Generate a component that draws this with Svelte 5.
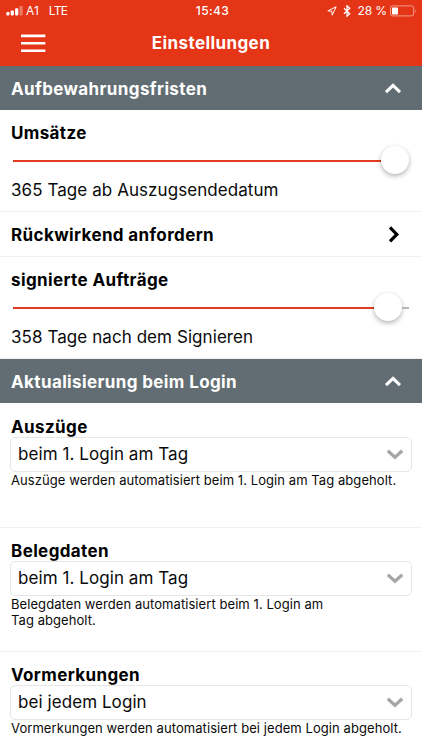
<script>
  let retention = [
    { name: 'Umsätze', days: 365, text: 'Tage ab Auszugsendedatum' },
    { name: 'signierte Aufträge', days: 358, text: 'Tage nach dem Signieren' },
  ];

  let updates = [
    {
      name: 'Auszüge',
      value: 'beim 1. Login am Tag',
      hint: ['Auszüge werden automatisiert beim 1. Login am Tag abgeholt.'],
    },
    {
      name: 'Belegdaten',
      value: 'beim 1. Login am Tag',
      hint: ['Belegdaten werden automatisiert beim 1. Login am', 'Tag abgeholt.'],
    },
    {
      name: 'Vormerkungen',
      value: 'bei jedem Login',
      hint: ['Vormerkungen werden automatisiert bei jedem Login abgeholt.'],
    },
  ];

  let showRetention = true;
  let showUpdates = true;

  // the knob is 28px wide and moves inside the track
  const fill = (days) => `calc((100% - 28px) * ${days / 365})`;
</script>

{#snippet slider(item)}
  <div class="row slider-row">
    <div class="label">{item.name}</div>
    <div class="slider">
      <div class="filled" style="width: {fill(item.days)}"></div>
      <div class="knob"></div>
      <div class="rest"></div>
    </div>
    <div class="value">{item.days} {item.text}</div>
  </div>
{/snippet}

{#snippet band(title, toggle)}
  <button class="band" on:click={toggle}>
    <span>{title}</span>
    <svg width="18" height="12" viewBox="0 0 18 12">
      <path d="M2 9.2 L9 2.4 L16 9.2" fill="none" stroke="#fff" stroke-width="3" />
    </svg>
  </button>
{/snippet}

<div class="screen">
  <header>
    <div class="status">
      <div class="left">
        <svg width="20" height="12" viewBox="0 0 20 12">
          <rect x="0.3" y="7" width="3.2" height="3.4" rx="0.8" fill="#fff" />
          <rect x="4.7" y="5.4" width="3.2" height="5" rx="0.8" fill="#fff" />
          <rect x="9.1" y="3.2" width="3.2" height="7.2" rx="0.8" fill="#fff" />
          <rect x="13.5" y="1" width="3.2" height="9.4" rx="0.8" fill="#fff" opacity="0.35" />
        </svg>
        <span class="carrier">A1</span>
        <span class="net">LTE</span>
      </div>
      <div class="clock">15:43</div>
      <div class="right">
        <svg class="arrow" width="10" height="10" viewBox="0 0 10 10">
          <path d="M9.1 0.8 L0.8 4.9 L4.8 5.1 L5.2 9.2 Z" fill="none" stroke="#fff" stroke-width="1" stroke-linejoin="round" />
        </svg>
        <svg class="bt" width="8" height="12" viewBox="0 0 8 12">
          <path d="M1 3.3 L6.7 8.7 L4 11.2 V0.8 L6.7 3.3 L1 8.7" fill="none" stroke="#fff" stroke-width="1.3" />
        </svg>
        <span class="percent">28 %</span>
        <svg width="27" height="12" viewBox="0 0 27 12">
          <rect x="0.5" y="0.9" width="23.2" height="10" rx="2" fill="none" stroke="#fff" stroke-opacity="0.5" />
          <rect x="2" y="2.4" width="6" height="7" rx="0.6" fill="#fff" />
          <path d="M25 4 Q26.6 6 25 8 Z" fill="#fff" opacity="0.5" />
        </svg>
      </div>
    </div>
    <div class="bar">
      <button class="menu" aria-label="Menü">
        <svg width="25" height="19" viewBox="0 0 25 19">
          <path d="M0 1.9 H24.4 M0 9.3 H24.4 M0 16.8 H24.4" fill="none" stroke="#fff" stroke-width="2.6" />
        </svg>
      </button>
      <h1>Einstellungen</h1>
    </div>
  </header>

  {@render band('Aufbewahrungsfristen', () => (showRetention = !showRetention))}
  {#if showRetention}
    {@render slider(retention[0])}
    <div class="row link">
      <span>Rückwirkend anfordern</span>
      <svg width="12" height="18" viewBox="0 0 12 18">
        <path d="M2 1.4 L8.8 8.4 L2 15.4" fill="none" stroke="#000" stroke-width="3.2" />
      </svg>
    </div>
    {@render slider(retention[1])}
  {/if}

  {@render band('Aktualisierung beim Login', () => (showUpdates = !showUpdates))}
  {#if showUpdates}
    {#each updates as item}
      <div class="update">
        <div class="label">{item.name}</div>
        <div class="select">
          <span>{item.value}</span>
          <svg width="18" height="12" viewBox="0 0 18 12">
            <path d="M1.8 2.7 L9 9.3 L16.2 2.7" fill="none" stroke="#a6a6a6" stroke-width="3.2" />
          </svg>
        </div>
        <div class="hint">
          {#each item.hint as line}
            <div>{line}</div>
          {/each}
        </div>
      </div>
    {/each}
  {/if}
</div>

<style>
  :global(body) {
    margin: 0;
    background: #fff;
  }

  .screen {
    width: 422px;
    height: 750px;
    overflow: hidden;
    font-family: Inter, 'Liberation Sans', sans-serif;
    font-size: 17px;
    letter-spacing: 0.07px;
    color: #0a0a0a;
  }

  button {
    border: 0;
    font: inherit;
    color: inherit;
  }

  svg {
    display: block;
    flex: none;
  }

  header {
    height: 66px;
    background: #e53517;
    color: #fff;
  }

  .status {
    display: grid;
    grid-template-columns: 1fr auto 1fr;
    align-items: center;
    height: 22px;
    padding: 0 5px 0 6px;
    font-size: 12px;
    line-height: 22px;
    letter-spacing: 0;
  }

  .left,
  .right {
    display: flex;
    align-items: center;
  }

  .right {
    justify-content: flex-end;
  }

  .net {
    margin-left: 10px;
    letter-spacing: -0.7px;
  }

  .clock {
    padding-left: 2px;
    font-weight: 500;
    letter-spacing: 0.4px;
  }

  .arrow {
    margin-right: 1px;
  }

  .bt {
    margin-left: 5px;
  }

  .percent {
    margin: 0 3px 0 6px;
    letter-spacing: -0.1px;
  }

  .bar {
    display: grid;
    grid-template-columns: 60px 1fr 60px;
    align-items: center;
    height: 42px;
  }

  .menu {
    width: 25px;
    margin-left: 20.5px;
    padding: 0;
    background: none;
  }

  h1 {
    margin: 0;
    font-size: 17px;
    font-weight: 650;
    letter-spacing: 0.4px;
    line-height: 20px;
    text-align: center;
  }

  .band {
    display: flex;
    align-items: center;
    justify-content: space-between;
    box-sizing: border-box;
    width: 100%;
    height: 44px;
    padding: 1px 20px 0 11px;
    background: #626d73;
    color: #fff;
    font-weight: 650;
    letter-spacing: 0.38px;
  }

  .row {
    box-sizing: border-box;
    padding: 13px 10px 0 11px;
    border-bottom: 1px solid #f0f0f0;
  }

  .label,
  .link {
    font-weight: 650;
    letter-spacing: 0.38px;
    line-height: 20px;
    color: #000;
  }

  .slider-row {
    height: 102px;
  }

  .slider {
    display: flex;
    align-items: center;
    height: 36px;
    margin: 0 3px 0 2px;
  }

  .filled {
    flex: none;
    height: 2px;
    background: #e03c20;
  }

  .knob {
    flex: none;
    width: 28px;
    height: 28px;
    margin-top: -2px;
    border-radius: 50%;
    background: #fff;
    box-shadow: 0 2px 5px rgba(0, 0, 0, 0.3);
  }

  .rest {
    flex: 1 1 0;
    height: 2px;
    background: #b5b5b5;
  }

  .value {
    margin-top: 1px;
    line-height: 20px;
  }

  .link {
    display: flex;
    align-items: center;
    justify-content: space-between;
    height: 45px;
    padding: 2px 22px 0 11px;
  }

  .update {
    box-sizing: border-box;
    height: 124px;
    padding: 14px 10px 0 11px;
  }

  .update + .update {
    padding-top: 13px;
    border-top: 1px solid #f0f0f0;
  }

  .select {
    display: flex;
    align-items: center;
    justify-content: space-between;
    box-sizing: border-box;
    height: 35px;
    margin-left: -1px;
    padding: 0 7px 1px;
    border: 1px solid #e6e6e6;
    border-radius: 5px;
  }

  .hint {
    font-size: 13px;
    letter-spacing: 0.07px;
    line-height: 16px;
    white-space: nowrap;
  }
</style>
